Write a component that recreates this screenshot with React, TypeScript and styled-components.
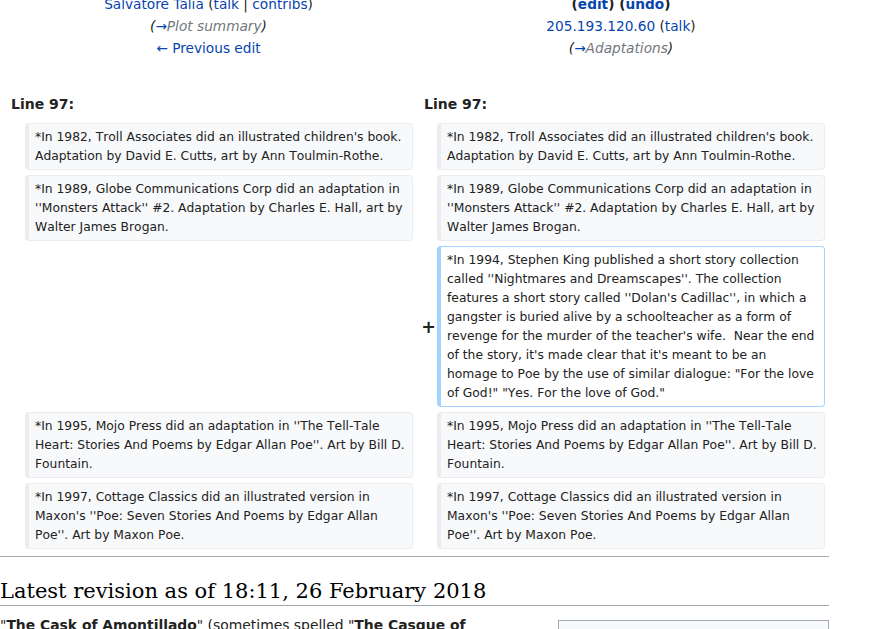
import React from "react";
import styled, { createGlobalStyle } from "styled-components";

const Global = createGlobalStyle`
  html, body { margin: 0; padding: 0; background: #fff; overflow: hidden; }
  body { font-family: "DejaVu Sans", sans-serif; color: #222; font-size: 14px; }
  a { text-decoration: none; color: #0645ad; }
`;

const Page = styled.div`
  width: 829px;
  margin-top: -7px;
`;

const DiffGrid = styled.div`
  display: grid;
  grid-template-columns: 17px 388px 16px 388px;
  column-gap: 4px;
  row-gap: 5px;
  padding: 0 0 4px 4px;
`;

const TitleCell = styled.div`
  grid-column: span 2;
  text-align: center;
  line-height: 22px;
  font-size: 13.7px;
`;

const TitleLine = styled.div<{ $bold?: boolean }>`
  font-weight: ${(p) => (p.$bold ? "bold" : "normal")};
`;

const Comment = styled.span`
  font-style: italic;
`;

const Auto = styled.span`
  color: #72777d;
`;

const LineNo = styled.div`
  grid-column: span 2;
  font-weight: bold;
  font-size: 14px;
  line-height: 22px;
  padding: 0 7px;
  margin: 29px 0 3px;
`;

const Marker = styled.div`
  display: flex;
  align-items: center;
  justify-content: flex-end;
  font-weight: bold;
  font-size: 17.5px;
  margin-right: -3px;
  color: #222;
`;

const Empty = styled.div`
  grid-column: span 2;
`;

const Box = styled.div<{ $added?: boolean }>`
  font-size: 12.32px;
  font-kerning: none;
  line-height: 19px;
  white-space: pre-wrap;
  color: #222;
  background: ${(p) => (p.$added ? "#fff" : "#f8f9fa")};
  border-style: solid;
  border-width: 1px 1px 1px 4px;
  border-color: ${(p) => (p.$added ? "#a3d3ff" : "#eaecf0")};
  border-radius: 4px;
  padding: 3.5px 6px;
`;

const Hr = styled.hr`
  border: 0;
  height: 1px;
  background: #a2a9b1;
  margin: 3px 0 0;
`;

const Heading = styled.h2`
  font-family: "DejaVu Serif", serif;
  font-weight: normal;
  font-size: 21px;
  line-height: 27px;
  margin: 21px 0 0;
  padding: 0;
  border-bottom: 1px solid #a2a9b1;
  color: #000;
`;

const Body = styled.div`
  display: flex;
  align-items: flex-start;
  gap: 14px;
  margin-top: 5px;
`;

const Para = styled.p`
  flex: 1;
  margin: 3px 0 0;
  font-size: 13.9px;
  line-height: 22px;
  color: #222;
`;

const Infobox = styled.div`
  width: 269px;
  height: 60px;
  margin-top: 9px;
  border: 1px solid #a2a9b1;
  background: #f8f9fa;
`;

const rows: { left: string | null; right: string; added?: boolean }[] = [
  {
    left: "*In 1982, Troll Associates did an illustrated children's book. Adaptation by David E. Cutts, art by Ann Toulmin-Rothe.",
    right: "*In 1982, Troll Associates did an illustrated children's book. Adaptation by David E. Cutts, art by Ann Toulmin-Rothe.",
  },
  {
    left: "*In 1989, Globe Communications Corp did an adaptation in ''Monsters Attack'' #2. Adaptation by Charles E. Hall, art by Walter James Brogan.",
    right: "*In 1989, Globe Communications Corp did an adaptation in ''Monsters Attack'' #2. Adaptation by Charles E. Hall, art by Walter James Brogan.",
  },
  {
    left: null,
    right:
      "*In 1994, Stephen King published a short story collection called ''Nightmares and Dreamscapes''. The collection features a short story called ''Dolan's Cadillac'', in which a gangster is buried alive by a schoolteacher as a form of revenge for the murder of the teacher's wife.  Near the end of the story, it's made clear that it's meant to be an homage to Poe by the use of similar dialogue: \"For the love of God!\" \"Yes. For the love of God.\"",
    added: true,
  },
  {
    left: "*In 1995, Mojo Press did an adaptation in ''The Tell-Tale Heart: Stories And Poems by Edgar Allan Poe''. Art by Bill D. Fountain.",
    right: "*In 1995, Mojo Press did an adaptation in ''The Tell-Tale Heart: Stories And Poems by Edgar Allan Poe''. Art by Bill D. Fountain.",
  },
  {
    left: "*In 1997, Cottage Classics did an illustrated version in Maxon's ''Poe: Seven Stories And Poems by Edgar Allan Poe''. Art by Maxon Poe.",
    right: "*In 1997, Cottage Classics did an illustrated version in Maxon's ''Poe: Seven Stories And Poems by Edgar Allan Poe''. Art by Maxon Poe.",
  },
];

export default function App() {
  return (
    <>
      <Global />
      <Page>
        <DiffGrid>
          <TitleCell>
            <TitleLine>
              <a href="#">Salvatore Talia</a> (<a href="#">talk</a> | <a href="#">contribs</a>)
            </TitleLine>
            <TitleLine>
              <Comment>
                (<a href="#">→</a>
                <Auto>Plot summary</Auto>)
              </Comment>
            </TitleLine>
            <TitleLine>
              <a href="#">← Previous edit</a>
            </TitleLine>
          </TitleCell>
          <TitleCell>
            <TitleLine $bold>
              (<a href="#">edit</a>) (<a href="#">undo</a>)
            </TitleLine>
            <TitleLine>
              <a href="#">205.193.120.60</a> (<a href="#">talk</a>)
            </TitleLine>
            <TitleLine>
              <Comment>
                (<a href="#">→</a>
                <Auto>Adaptations</Auto>)
              </Comment>
            </TitleLine>
          </TitleCell>

          <LineNo>Line 97:</LineNo>
          <LineNo>Line 97:</LineNo>

          {rows.map((r, i) => (
            <React.Fragment key={i}>
              {r.left === null ? (
                <Empty />
              ) : (
                <>
                  <Marker />
                  <Box>{r.left}</Box>
                </>
              )}
              <Marker>{r.added ? "+" : ""}</Marker>
              <Box $added={r.added}>{r.right}</Box>
            </React.Fragment>
          ))}
        </DiffGrid>
        <Hr />
        <Heading>Latest revision as of 18:11, 26 February 2018</Heading>
        <Body>
          <Para>
            "<b>The Cask of Amontillado</b>" (sometimes spelled "<b>The Casque of Amontillado</b>") is a short story by Edgar Allan Poe, first published in the November 1846 issue of Godey's Lady's Book.
          </Para>
          <Infobox />
        </Body>
      </Page>
    </>
  );
}
